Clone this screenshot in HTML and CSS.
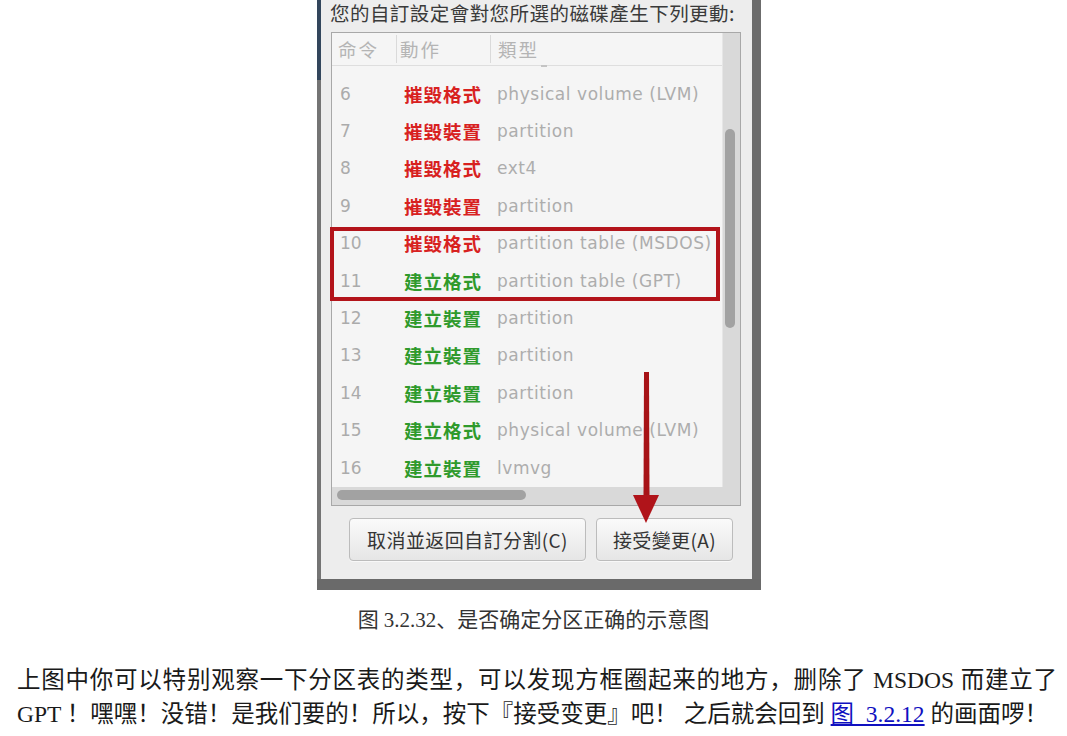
FILE: index.html
```html
<!DOCTYPE html>
<html lang="zh">
<head>
<meta charset="utf-8">
<title>图 3.2.32</title>
<link rel="stylesheet" href="styles.css">
</head>
<body>
<div class="page">
  <div class="shot">
    <div class="edge-left"></div>
    <div class="dialog">
      <div class="dlg-title">您的自訂設定會對您所選的磁碟產生下列更動:</div>
      <div class="frame">
        <div class="list">
          <div class="thead">
            <div class="th th-num">命令</div>
            <div class="th th-act">動作</div>
            <div class="th th-type">類型</div>
          </div>
          <div class="rows">
            <div class="row"><span class="num">6</span><span class="act del">摧毀格式</span><span class="type">physical volume (LVM)</span></div>
            <div class="row"><span class="num">7</span><span class="act del">摧毀裝置</span><span class="type">partition</span></div>
            <div class="row"><span class="num">8</span><span class="act del">摧毀格式</span><span class="type">ext4</span></div>
            <div class="row"><span class="num">9</span><span class="act del">摧毀裝置</span><span class="type">partition</span></div>
            <div class="row"><span class="num">10</span><span class="act del">摧毀格式</span><span class="type">partition table (MSDOS)</span></div>
            <div class="row"><span class="num">11</span><span class="act add">建立格式</span><span class="type">partition table (GPT)</span></div>
            <div class="row"><span class="num">12</span><span class="act add">建立裝置</span><span class="type">partition</span></div>
            <div class="row"><span class="num">13</span><span class="act add">建立裝置</span><span class="type">partition</span></div>
            <div class="row"><span class="num">14</span><span class="act add">建立裝置</span><span class="type">partition</span></div>
            <div class="row"><span class="num">15</span><span class="act add">建立格式</span><span class="type">physical volume (LVM)</span></div>
            <div class="row"><span class="num">16</span><span class="act add">建立裝置</span><span class="type">lvmvg</span></div>
          </div>
        </div>
        <div class="vscroll"><div class="vthumb"></div></div>
        <div class="hscroll"><div class="hthumb"></div></div>
      </div>
      <div class="buttons">
        <button class="btn btn-cancel" type="button">取消並返回自訂分割(C)</button>
        <button class="btn btn-accept" type="button">接受變更(A)</button>
      </div>
    </div>
    <div class="edge-right"></div>
    <div class="edge-bottom"></div>
    <div class="highlight"></div>
    <svg class="arrow" width="28" height="152" viewBox="0 0 28 152" aria-hidden="true">
      <path d="M12 0 L17 0 L17.5 126 L11.5 126 Z" fill="#a71317"/>
      <path d="M1 123 L27 123 L14 151 Z" fill="#b0141a"/>
    </svg>
  </div>
  <p class="caption">图 3.2.32、是否确定分区正确的示意图</p>
  <p class="para">上图中你可以特别观察一下分区表的类型，可以发现方框圈起来的地方，删除了 MSDOS 而建立了 <span class="nobr">GPT ！</span>嘿嘿！没错！是我们要的！所以，按下『接受变更』吧！ 之后就会回到 <a class="link" href="#">图 &nbsp;3.2.12</a> 的画面啰！</p>
</div>
</body>
</html>
```

FILE: styles.css
```css
html, body {
  margin: 0;
  padding: 0;
  background: #ffffff;
}

.page {
  width: 1067px;
  font-family: "Liberation Serif", "Noto Sans CJK SC", serif;
  color: #1c1c1c;
}

/* ---------- screenshot figure ---------- */
.shot {
  position: relative;
  margin-left: 317px;
  width: 444px;
  display: grid;
  grid-template-columns: 4px 431px 9px;
  grid-template-rows: 579px 11px;
  background: #6e6e6e;
}

.edge-left {
  background: linear-gradient(#33465c 0, #33465c 80px, #747474 80px);
}

.edge-right {
  background: #6c6c6c;
}

.edge-bottom {
  grid-column: 1 / -1;
  background: #6a6a6a;
}

.dialog {
  background: #ededed;
  display: flex;
  flex-direction: column;
  font-family: "DejaVu Sans", "Noto Sans CJK TC", sans-serif;
}

.dlg-title {
  height: 24px;
  line-height: 26px;
  padding-left: 9px;
  font-family: "Noto Sans CJK TC", sans-serif;
  font-size: 19.5px;
  letter-spacing: 0.45px;
  color: #3a3a3a;
  white-space: nowrap;
}

.frame {
  margin: 8px 0 0 10px;
  width: 408px;
  height: 472px;
  border: 1px solid #a8a8a8;
  display: grid;
  grid-template-columns: 390px 18px;
  grid-template-rows: 454px 18px;
  background: #f5f5f5;
}

.list {
  overflow: hidden;
  background: #f5f5f5;
}

.thead {
  height: 32px;
  border-bottom: 1px solid #dedede;
  display: grid;
  grid-template-columns: 64px 94px 1fr;
  align-items: center;
}

.th {
  position: relative;
  height: 28px;
  line-height: 28px;
  font-family: "Noto Sans CJK TC", sans-serif;
  font-size: 18.5px;
  letter-spacing: 2px;
  color: #b4b4b4;
}

.th-num { padding-left: 6px; }
.th-act { padding-left: 3px; border-left: 1px solid #dadada; }
.th-type { padding-left: 7px; border-left: 1px solid #dadada; }

.th-type::after {
  content: "";
  position: absolute;
  left: 50px;
  bottom: -4px;
  width: 6px;
  height: 2px;
  background: #c4c4c4;
}

.rows {
  padding-top: 9px;
}

.row {
  height: 37.4px;
  display: grid;
  grid-template-columns: 65px 93px 1fr;
  align-items: center;
  white-space: nowrap;
}

.num {
  padding-left: 8px;
  font-size: 17px;
  color: #ababab;
}

.act {
  padding-left: 7px;
  font-family: "Noto Sans CJK TC", sans-serif;
  font-weight: 700;
  font-size: 18.5px;
  letter-spacing: 1px;
}

.act.del { color: #d8211f; }
.act.add { color: #2f9a2c; }

.type {
  padding-left: 7px;
  font-size: 17px;
  letter-spacing: 0.55px;
  color: #adadad;
}

.vscroll {
  background: #d9d9d9;
  border-left: 1px solid #e6e6e6;
  padding: 96px 0 0 2px;
}

.vthumb {
  width: 10px;
  height: 199px;
  border-radius: 5px;
  background: #a2a2a2;
}

.hscroll {
  grid-column: 1 / -1;
  background: #d9d9d9;
  padding: 3px 0 0 5px;
}

.hthumb {
  width: 189px;
  height: 10px;
  border-radius: 5px;
  background: #a2a2a2;
}

.buttons {
  margin-top: 12px;
  padding-left: 28px;
  display: flex;
  gap: 10px;
}

.btn {
  height: 43px;
  padding: 0;
  border: 1px solid #bcbcbc;
  border-radius: 4px;
  background: linear-gradient(#fafafa, #e6e6e6);
  font-family: "Noto Sans CJK TC", sans-serif;
  font-size: 19px;
  letter-spacing: 0.4px;
  color: #353535;
  box-shadow: 0 1px 0 #f8f8f8;
}

.btn-cancel { width: 237px; }
.btn-accept { width: 137px; }

/* annotations drawn over the screenshot */
.highlight {
  position: absolute;
  left: 13px;
  top: 227px;
  width: 382px;
  height: 66px;
  border: 4px solid #b3141a;
}

.arrow {
  position: absolute;
  left: 315px;
  top: 372px;
}

/* ---------- caption & text ---------- */
.caption {
  margin: 15px 0 0;
  height: 30px;
  line-height: 30px;
  text-align: center;
  font-size: 21px;
  color: #333333;
}

.para {
  margin: 28px 0 0;
  padding: 0 10px 0 17px;
  font-size: 23.5px;
  line-height: 34px;
  text-align: justify;
  color: #1a1a1a;
}

.nobr {
  white-space: nowrap;
}

.link {
  color: #1010c0;
  text-decoration: underline;
}
```
